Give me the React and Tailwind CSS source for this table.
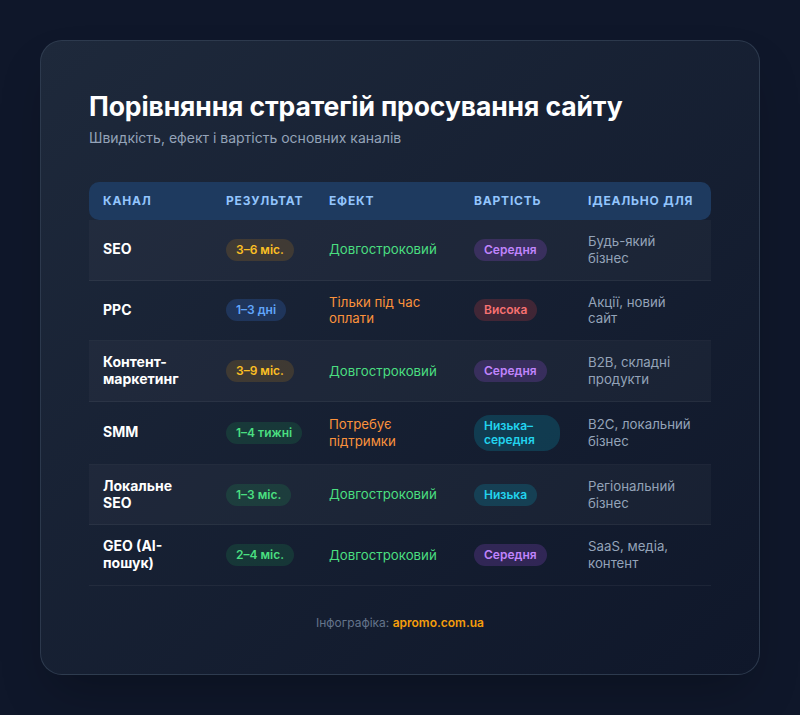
import React from "react";

const badgeStyles = {
  amber: "bg-[#f59e0b]/15 text-[#fbbf24]",
  blue: "bg-[#3b82f6]/20 text-[#60a5fa]",
  green: "bg-[#22c55e]/15 text-[#4ade80]",
  purple: "bg-[#a855f7]/20 text-[#c084fc]",
  red: "bg-[#ef4444]/20 text-[#f87171]",
  cyan: "bg-[#06b6d4]/20 text-[#22d3ee]",
};

const effectStyles = {
  green: "text-[#4ade80]",
  orange: "text-[#fb923c]",
};

const rows = [
  { name: "SEO", result: "3–6 міс.", rc: "amber", effect: "Довгостроковий", ec: "green", cost: "Середня", cc: "purple", ideal: "Будь-який бізнес" },
  { name: "PPC", result: "1–3 дні", rc: "blue", effect: "Тільки під час оплати", ec: "orange", cost: "Висока", cc: "red", ideal: "Акції, новий сайт" },
  { name: "Контент-маркетинг", result: "3–9 міс.", rc: "amber", effect: "Довгостроковий", ec: "green", cost: "Середня", cc: "purple", ideal: "B2B, складні продукти" },
  { name: "SMM", result: "1–4 тижні", rc: "green", effect: "Потребує підтримки", ec: "orange", cost: "Низька–середня", cc: "cyan", ideal: "B2C, локальний бізнес" },
  { name: "Локальне SEO", result: "1–3 міс.", rc: "green", effect: "Довгостроковий", ec: "green", cost: "Низька", cc: "cyan", ideal: "Регіональний бізнес" },
  { name: "GEO (AI-пошук)", result: "2–4 міс.", rc: "green", effect: "Довгостроковий", ec: "green", cost: "Середня", cc: "purple", ideal: "SaaS, медіа, контент" },
];

const cols = "grid grid-cols-[123px_103px_145px_114px_137px]";

const Badge = ({ tone, children }) => (
  <span className={`inline-block rounded-2xl px-[10px] py-[4px] text-[12px] font-semibold leading-[14px] ${badgeStyles[tone]}`}>
    {children}
  </span>
);

export default function App() {
  return (
    <div className="min-h-screen w-full bg-[#0f172a] pt-[40px] pb-[40px]" style={{ fontFamily: "Inter, 'Noto Sans', sans-serif" }}>
      <div className="mx-auto w-[720px] h-[635px] rounded-[22px] border border-[#334155]/80 bg-gradient-to-br from-[#1e293b] to-[#0f172a] px-[48px] pt-[48px] shadow-2xl">
        {/* Title */}
        <h1 className="text-[26.5px] font-bold leading-[34px] text-white tracking-[-0.1px]">
          Порівняння стратегій просування сайту
        </h1>
        <p className="mt-[4px] text-[14px] text-[#94a3b8]">Швидкість, ефект і вартість основних каналів</p>

        {/* Table */}
        <div className="mt-[34px] w-[622px]">
          <div className={`${cols} h-[38px] items-center rounded-[10px] bg-[#1e3a5f] text-[12px] font-bold uppercase tracking-[0.8px] text-[#93c5fd]`}>
            <div className="pl-[14px]">Канал</div>
            <div className="pl-[14px]">Результат</div>
            <div className="pl-[14px]">Ефект</div>
            <div className="pl-[14px]">Вартість</div>
            <div className="pl-[14px]">Ідеально для</div>
          </div>

          {rows.map((r, i) => (
            <div
              key={r.name}
              className={`${cols} items-center py-[13px] border-b border-white/5 text-[13.25px] leading-[16.8px] ${i % 2 === 0 ? "bg-white/[0.03]" : ""}`}
            >
              <div className="pl-[14px] pr-[22px] text-[14px] font-bold text-white">{r.name}</div>
              <div className="pl-[14px]">
                <Badge tone={r.rc}>{r.result}</Badge>
              </div>
              <div className={`pl-[14px] pr-[14px] ${effectStyles[r.ec]}`}>{r.effect}</div>
              <div className="pl-[14px] pr-[14px]">
                <Badge tone={r.cc}>{r.cost}</Badge>
              </div>
              <div className="pl-[14px] pr-[14px] text-[#94a3b8]">{r.ideal}</div>
            </div>
          ))}
        </div>

        {/* Footer */}
        <p className="mt-[28px] text-center text-[12px] text-[#64748b]">
          Інфографіка: <span className="font-semibold text-[#f59e0b]">apromo.com.ua</span>
        </p>
      </div>
    </div>
  );
}
